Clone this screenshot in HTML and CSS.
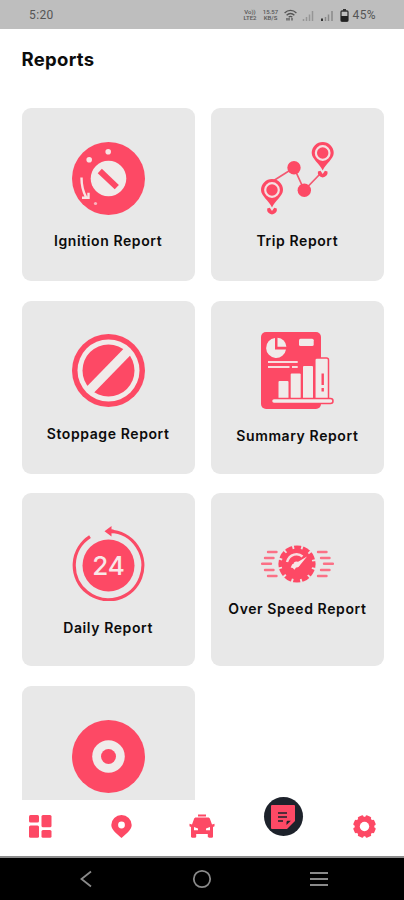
FILE: index.html
```html
<!DOCTYPE html>
<html lang="en">
<head>
    <meta charset="UTF-8">
    <meta name="viewport" content="width=device-width, initial-scale=1.0">
    <title>Reports</title>
    <link rel="stylesheet" href="styles.css">
</head>
<body>
    <div class="status-bar">
        <span class="time">5:20</span>
        <div class="status-icons">
            <span class="tiny volte">Vo))<br>LTE2</span>
            <span class="tiny speed">15.57<br>KB/S</span>
            <svg class="wifi" width="13" height="12" viewBox="0 0 13 12" fill="none" stroke="#555" stroke-width="1.3">
                <path d="M.6 4C4 .4 9 .4 12.4 4M2.6 6.2c2.3-2.3 5.5-2.3 7.8 0M4.7 8.2c1.1-1 2.5-1 3.6 0"/>
                <path d="M3 9v2.5M5 9v2.5M8 9v2.5"/>
            </svg>
            <svg class="signal" width="13" height="11" viewBox="0 0 13 11" stroke="#969696" stroke-width="1.5">
                <path d="M1.5 11V9M4.5 11V7M7.5 11V4.5M10.5 11V1"/>
            </svg>
            <svg class="signal" width="13" height="11" viewBox="0 0 13 11" stroke="#8a8a8a" stroke-width="1.5">
                <path d="M4.5 11V7M7.5 11V4.5M11 11V1"/>
                <path d="M1 11V8.5" stroke="#333" stroke-width="2"/>
            </svg>
            <svg class="battery" width="9" height="13" viewBox="0 0 9 13">
                <path d="M3 0h3v2H3z" fill="#333"/>
                <rect x="1" y="2" width="7" height="10.3" rx="1" fill="none" stroke="#333" stroke-width="1.3"/>
                <path d="M1 7h7v5H1z" fill="#222"/>
            </svg>
            <span class="percent">45%</span>
        </div>
    </div>

    <main class="content">
        <h1>Reports</h1>
        <div class="grid">
            <div class="card">
                <svg width="73" height="73" viewBox="-36.5 -36.5 73 73">
                    <circle r="36.5" fill="#fd4965"/>
                    <circle r="17.8" fill="#f0ebea"/>
                    <path d="M-8.7-7.5L8.3 8.7" stroke="#fd4965" stroke-width="6"/>
                    <g fill="#f8e3e4">
                        <circle cx="-.3" cy="-26.7" r="2.8"/>
                        <circle cx="-19.3" cy="-18.7" r="2.8"/>
                        <circle cx="-13" cy="25" r="1.6" opacity=".7"/>
                    </g>
                    <path d="M-27-1c0 8 1.5 14 4.5 19.5M-26.5 19.3h6.5v-5" fill="none" stroke="#f8e3e4" stroke-width="2.4"/>
                </svg>
                <p>Ignition Report</p>
            </div>

            <div class="card">
                <svg width="73" height="73" viewBox="0 0 73 73">
                    <path d="M12 39l21-13.3 10.3 22.6L59 32" fill="none" stroke="#f35a72" stroke-width="1.7"/>
                    <g fill="#fd4965">
                        <circle cx="33" cy="25.7" r="6.7"/>
                        <circle cx="43.3" cy="48.3" r="6.7"/>
                        <path d="M11 65.5C8 58.5 0 54 0 48a11 11 0 0 1 22 0c0 6-8 10.5-11 17.5z"/>
                        <path d="M61.7 28.5c-3-7-11-11.5-11-17.5a11 11 0 0 1 22 0c0 6-8 10.5-11 17.5z"/>
                        <path d="M6.2 66.5l2.6-.8L11 69l2.2-3.3 2.6.8a4.9 4.9 0 1 1-9.6 0z"/>
                        <path d="M56.9 29.5l2.6-.8 2.2 3.3 2.2-3.3 2.6.8a4.9 4.9 0 1 1-9.6 0z"/>
                    </g>
                    <g fill="#fd4965" stroke="#f5dfe1" stroke-width="2.2">
                        <circle cx="11" cy="48" r="6.8"/>
                        <circle cx="61.7" cy="11" r="6.8"/>
                    </g>
                </svg>
                <p>Trip Report</p>
            </div>

            <div class="card">
                <svg width="73" height="73" viewBox="-36.5 -36.5 73 73">
                    <circle r="36.5" fill="#fd4965"/>
                    <circle r="31" fill="#f0ebea"/>
                    <circle r="26" fill="#fd4965"/>
                    <path d="M-18.5 19.5l38-39" stroke="#f0ebea" stroke-width="9.5"/>
                </svg>
                <p>Stoppage Report</p>
            </div>

            <div class="card">
                <svg width="73" height="77" viewBox="0 0 73 77">
                    <rect width="60" height="77" rx="5" fill="#fd4965"/>
                    <path d="M14 6v11.5h11A10 10 0 1 1 14 6z" fill="#f0ebea"/>
                    <path d="M16.5 5.7a9.5 9.5 0 0 1 8.9 9h-8.9z" fill="#f0ebea"/>
                    <rect x="38" y="6.7" width="14.7" height="7.3" rx="1.5" fill="#f0ebea"/>
                    <path d="M7 30h29.7M7 35h21.5M31 35h5.7" stroke="#f8dcdf" stroke-width="2.2"/>
                    <g fill="#f0ebea">
                        <rect x="17.5" y="49" width="10" height="18" rx="1"/>
                        <rect x="29.7" y="41.5" width="10" height="25" rx="1"/>
                        <rect x="42" y="34" width="10" height="33" rx="1"/>
                        <rect x="53.8" y="26" width="13.7" height="42" rx="2" stroke="#fd4965" stroke-width="1.5"/>
                        <rect x="10.5" y="66.5" width="61.5" height="5" rx="2.5" stroke="#fd4965" stroke-width="1.5"/>
                    </g>
                    <path d="M61.7 41.5v11.5M61.7 56v3.5" stroke="#fd4965" stroke-width="2.4"/>
                </svg>
                <p>Summary Report</p>
            </div>

            <div class="card">
                <svg width="73" height="75" viewBox="0 0 73 75">
                    <circle cx="36.5" cy="39.5" r="26" fill="#fd4965"/>
                    <path d="M38 5.2A34.3 34.3 0 1 1 18 10.6" fill="none" stroke="#fa4b66" stroke-width="3.2"/>
                    <path d="M32.5 5.2L39.5 0v3.5h2v3.7h-2v3.4z" fill="#fd4965"/>
                    <text x="36.5" y="49" class="hours">24</text>
                </svg>
                <p>Daily Report</p>
            </div>

            <div class="card">
                <svg width="73" height="38" viewBox="0 0 73 38">
                    <g stroke="#fb7186" stroke-width="2.4" stroke-linecap="round">
                        <path d="M7 7h8.5M4 13h8.5M1 18.8h9M4 25h8.5M7 31h8.5"/>
                        <path d="M57 7h8.5M60 13h8.5M63 18.8h9M60 25h8.5M57 31h8.5"/>
                    </g>
                    <circle cx="36" cy="19" r="18.6" fill="#fd4965"/>
                    <circle cx="36" cy="19" r="17.4" fill="none" stroke="#ebe4e4" stroke-width="4" stroke-dasharray="1.9 7.211" stroke-dashoffset="5.4"/>
                    <path d="M26 17c2.5-8.5 11-9.5 15.5-5.5" fill="none" stroke="#f8dcdf" stroke-width="2.4"/>
                    <path d="M46 11.5l-7.5 9.3-3 1-2 3-1.8-1.8-2-.5 1.5-3.2 3-.8z" fill="#f8e6e7"/>
                    <circle cx="35.5" cy="19.5" r="3" fill="#f8e6e7"/>
                </svg>
                <p>Over Speed Report</p>
            </div>

            <div class="card">
                <svg width="73" height="73" viewBox="-36.5 -36.5 73 73">
                    <circle r="36.5" fill="#fd4965"/>
                    <circle r="16.3" fill="#f0ebea"/>
                    <circle r="7.5" fill="#fd4965"/>
                </svg>
                <p></p>
            </div>
        </div>
    </main>

    <nav class="tabs">
        <a class="tab">
            <svg width="23" height="23" viewBox="0 0 23 23" fill="#fd4965">
                <rect width="10" height="7.6" rx="1.5"/>
                <rect x="12.5" width="10" height="12.2" rx="1.5"/>
                <rect y="10.5" width="10" height="12.2" rx="1.5"/>
                <rect x="12.5" y="15.1" width="10" height="7.6" rx="1.5"/>
            </svg>
        </a>
        <a class="tab">
            <svg width="21" height="23" viewBox="0 0 21 23">
                <path d="M10.5 23C7 19.5.3 15.5.3 10a10.2 10 0 0 1 20.4 0c0 5.5-6.7 9.5-10.2 13z" fill="#fd4965"/>
                <circle cx="10.5" cy="10" r="3.4" fill="#fff"/>
            </svg>
        </a>
        <a class="tab">
            <svg width="26" height="24" viewBox="0 0 26 24">
                <path d="M9 .5h8v2H9zM7 3.5h12c1 0 1.7.5 2 1.5l2 5.5 2.5-.7v2.4l-1.5.8v9.5c0 .8-.4 1.2-1.2 1.2H20c-.8 0-1.2-.4-1.2-1.2V20H7.2v2.5c0 .8-.4 1.2-1.2 1.2H3.2c-.8 0-1.2-.4-1.2-1.2V13L.5 12.2V9.8l2.5.7L5 5c.3-1 1-1.5 2-1.5z" fill="#fd4965"/>
                <path d="M5 13l4 1.5v1.7H5zM21 13l-4 1.5v1.7h4z" fill="#fff"/>
            </svg>
        </a>
        <a class="tab active">
            <span class="bubble">
                <svg width="24" height="24" viewBox="0 0 24 24">
                    <path d="M1 0h22a1 1 0 0 1 1 1v15l-8 8H1a1 1 0 0 1-1-1V1a1 1 0 0 1 1-1z" fill="#fd4965"/>
                    <path d="M7 8h9M7 12h9M7 16h5" stroke="#1d222b" stroke-width="1.7"/>
                    <path d="M15.5 20v-2.700c0-1 .5-1.500 1.500-1.500h2.800z" fill="#1d222b"/>
                </svg>
            </span>
        </a>
        <a class="tab">
            <svg width="23" height="23" viewBox="-11.5 -11.5 23 23" fill="#fd4965">
                <circle r="9.8"/>
                <rect x="-3" y="-11.3" width="6" height="22.6" rx="1.5" transform="rotate(22.5)"/>
                <rect x="-3" y="-11.3" width="6" height="22.6" rx="1.5" transform="rotate(67.5)"/>
                <rect x="-3" y="-11.3" width="6" height="22.6" rx="1.5" transform="rotate(112.5)"/>
                <rect x="-3" y="-11.3" width="6" height="22.6" rx="1.5" transform="rotate(157.5)"/>
                <circle r="4.7" fill="#fff"/>
            </svg>
        </a>
    </nav>

    <div class="system-nav">
        <svg width="14" height="18" viewBox="0 0 14 18" fill="none" stroke="#8a8a8a" stroke-width="1.8">
            <path d="M12 1.5L2.5 9l9.5 7.5"/>
        </svg>
        <svg width="20" height="20" viewBox="0 0 20 20" fill="none" stroke="#8a8a8a" stroke-width="1.8">
            <circle cx="10" cy="10" r="8.2"/>
        </svg>
        <svg width="18" height="16" viewBox="0 0 18 16" stroke="#8a8a8a" stroke-width="2">
            <path d="M0 2h18M0 8h18M0 14h18"/>
        </svg>
    </div>
</body>
</html>
```

FILE: styles.css
```css
* {
    box-sizing: border-box;
}
body {
    margin: 0;
    height: 900px;
    display: flex;
    flex-direction: column;
    overflow: hidden;
    background-color: #fff;
    font-family: Inter, sans-serif;
    color: #0c0c0c;
}
svg {
    display: block;
    flex-shrink: 0;
}
.status-bar {
    height: 28.5px;
    flex-shrink: 0;
    display: flex;
    align-items: center;
    justify-content: space-between;
    padding: 2px 28px 0 29px;
    background-color: #bebebe;
    color: #555;
    font-family: Roboto, sans-serif;
    font-size: 12px;
    letter-spacing: 0.4px;
}
.status-icons {
    display: flex;
    align-items: center;
}
.tiny {
    font-size: 6px;
    line-height: 6px;
    font-weight: 500;
    letter-spacing: 0;
    text-align: center;
}
.volte {
    width: 15px;
    margin-right: 4px;
}
.speed {
    width: 18px;
    margin-right: 4px;
}
.wifi {
    margin-right: 5px;
}
.signal {
    margin-right: 6px;
}
.battery {
    margin-right: 4px;
}
.content {
    flex: 1;
    min-height: 0;
    overflow: hidden;
    padding: 0 20px 0 21.5px;
}
h1 {
    margin: 0;
    height: 79.5px;
    padding-top: 18px;
    font-size: 18.5px;
    line-height: 24px;
    font-weight: 700;
    letter-spacing: 0.3px;
}
.grid {
    display: grid;
    grid-template-columns: 1fr 1fr;
    grid-auto-rows: 173.3px;
    gap: 19.3px 16px;
}
.card {
    display: flex;
    flex-direction: column;
    align-items: center;
    justify-content: center;
    gap: 19.5px;
    background-color: #e8e8e8;
    border-radius: 9px;
}
.card p {
    margin: 0;
    height: 13px;
    font-size: 14px;
    line-height: 13px;
    font-weight: 600;
    letter-spacing: 0.6px;
    white-space: nowrap;
}
.hours {
    fill: #f8e8e8;
    font-size: 26px;
    font-weight: 500;
    text-anchor: middle;
}
.tabs {
    height: 56px;
    flex-shrink: 0;
    display: grid;
    grid-template-columns: repeat(5, 1fr);
    background-color: #fff;
}
.tab {
    display: flex;
    align-items: center;
    justify-content: center;
    padding: 0 0 4px 1px;
}
.tab.active {
    align-items: flex-start;
    padding: 0 0 0 1px;
    margin-top: -3px;
}
.bubble {
    width: 39px;
    height: 39px;
    display: flex;
    align-items: center;
    justify-content: center;
    border-radius: 50%;
    background-color: #1d222b;
}
.system-nav {
    height: 44px;
    flex-shrink: 0;
    display: flex;
    align-items: center;
    justify-content: space-between;
    padding: 0 76px 0 79px;
    border-top: 2px solid #8c8c8c;
    background-color: #000;
}
```
